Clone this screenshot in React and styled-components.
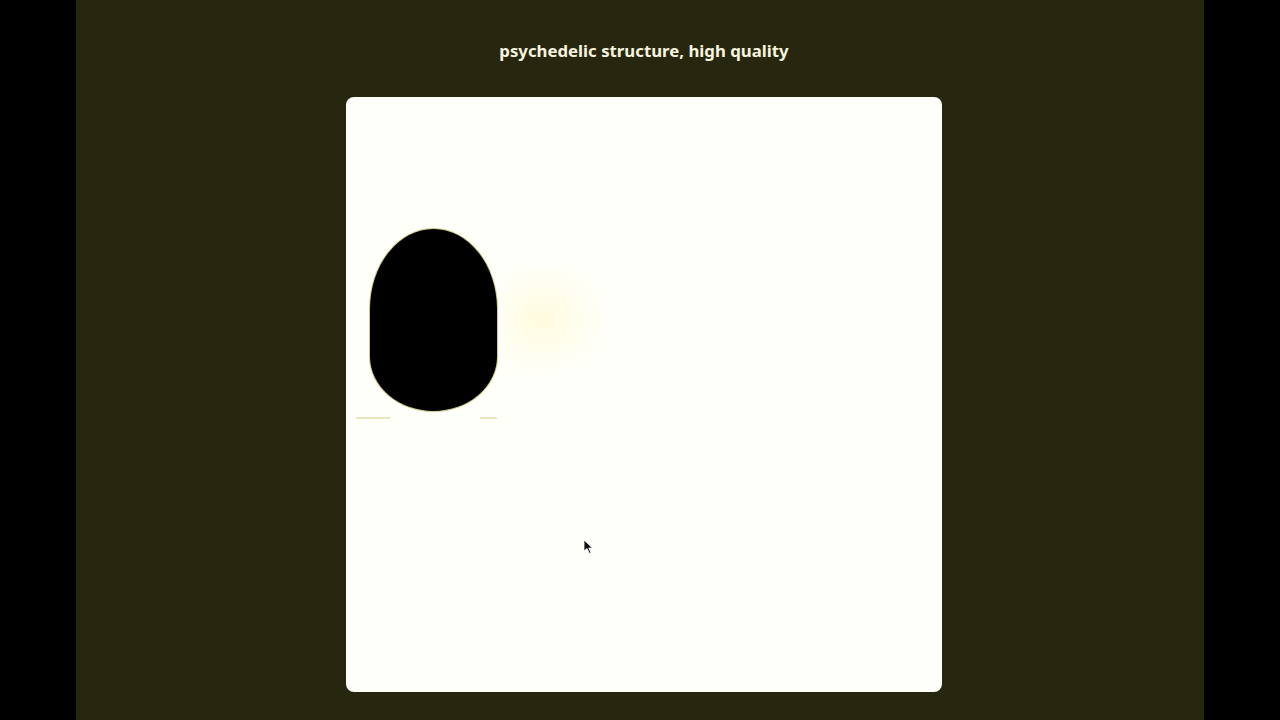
import React from "react";
import styled, { createGlobalStyle } from "styled-components";

const Global = createGlobalStyle`
  html, body { margin: 0; padding: 0; background: #000; }
  body { font-family: "Noto Sans", "Open Sans", sans-serif; }
`;

const Page = styled.div`
  width: 1280px;
  height: 720px;
  display: flex;
  justify-content: center;
  background: #000;
  overflow: hidden;
`;

const Stage = styled.main`
  width: 1128px;
  height: 720px;
  background: #27260f;
  display: flex;
  flex-direction: column;
  align-items: center;
  gap: 34px;
  padding: 39px 0 0 8px;
  box-sizing: border-box;
`;

const Title = styled.h1`
  margin: 0;
  height: 24px;
  font-size: 16.8px;
  line-height: 24px;
  font-weight: 700;
  color: #f6f3de;
`;

const Canvas = styled.div`
  position: relative;
  width: 596px;
  height: 595px;
  border-radius: 8px;
  background: #fffffa;
  overflow: hidden;
  display: flex;
  align-items: flex-start;
  padding: 132px 0 0 10px;
  box-sizing: border-box;
`;

const Figure = styled.div`
  display: flex;
  flex-direction: column;
  gap: 6px;
`;

const Blob = styled.div`
  margin-left: 14px;
  width: 127px;
  height: 182px;
  background: #000;
  border-radius: 50% 50% 50% 50% / 44% 44% 30% 30%;
  box-shadow: 0 0 0 1px #cfc88a;
`;

const Base = styled.div`
  display: flex;
  justify-content: space-between;
  width: 141px;
`;

const Dash = styled.div`
  width: ${(p) => p.$width}px;
  height: 2px;
  background: #ebe6c0;
`;

const Glow = styled.div`
  margin: 40px 0 0 6px;
  width: 110px;
  height: 110px;
  background: radial-gradient(ellipse at 35% 45%, rgba(255, 242, 160, 0.3), rgba(255, 250, 210, 0) 68%);
`;

const Cursor = styled.svg`
  position: absolute;
  left: 237px;
  top: 442px;
`;

export default function App() {
  return (
    <Page>
      <Global />
      <Stage>
        <Title>psychedelic structure, high quality</Title>
        <Canvas>
          <Figure>
            <Blob />
            <Base>
              <Dash $width={34} />
              <Dash $width={17} />
            </Base>
          </Figure>
          <Glow />
          <Cursor width="12" height="16" viewBox="0 0 12 16">
            <path d="M1 1 L1 12 L4 9.5 L6.5 14.5 L8 13.8 L5.8 9 L9.5 9 Z" fill="#111" stroke="#fff" strokeWidth="0.8" />
          </Cursor>
        </Canvas>
      </Stage>
    </Page>
  );
}
